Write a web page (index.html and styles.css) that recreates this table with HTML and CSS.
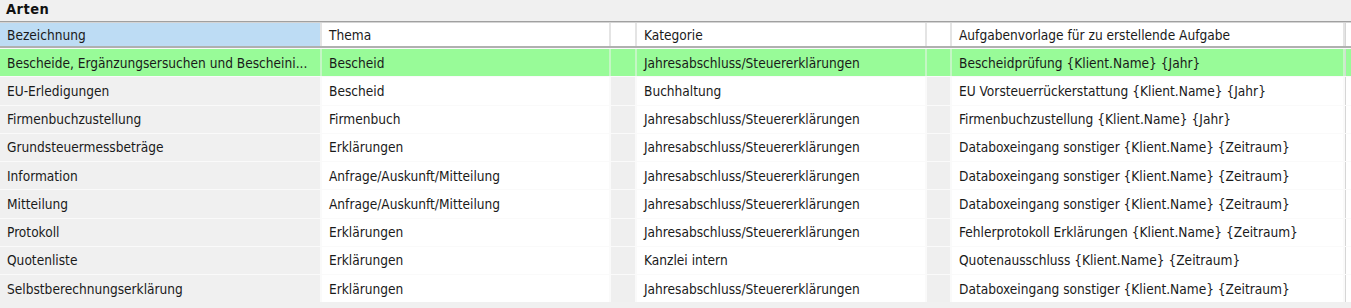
FILE: index.html
```html
<!DOCTYPE html>
<html lang="de">
<head>
<meta charset="utf-8">
<title>Arten</title>
<link rel="stylesheet" href="styles.css">
</head>
<body>
<div class="panel">
  <div class="title">Arten</div>
  <div class="table">
    <div class="row head">
      <div class="cell first">Bezeichnung</div>
      <div class="cell">Thema</div>
      <div class="cell narrow"></div>
      <div class="cell">Kategorie</div>
      <div class="cell narrow"></div>
      <div class="cell">Aufgabenvorlage für zu erstellende Aufgabe</div>
      <div class="cell end"></div>
    </div>
    <div class="row sel">
      <div class="cell first">Bescheide, Ergänzungsersuchen und Bescheini...</div>
      <div class="cell">Bescheid</div>
      <div class="cell narrow"></div>
      <div class="cell">Jahresabschluss/Steuererklärungen</div>
      <div class="cell narrow"></div>
      <div class="cell">Bescheidprüfung {Klient.Name} {Jahr}</div>
      <div class="cell end"></div>
    </div>
    <div class="row">
      <div class="cell first">EU-Erledigungen</div>
      <div class="cell">Bescheid</div>
      <div class="cell narrow"></div>
      <div class="cell">Buchhaltung</div>
      <div class="cell narrow"></div>
      <div class="cell">EU Vorsteuerrückerstattung {Klient.Name} {Jahr}</div>
      <div class="cell end"></div>
    </div>
    <div class="row">
      <div class="cell first">Firmenbuchzustellung</div>
      <div class="cell">Firmenbuch</div>
      <div class="cell narrow"></div>
      <div class="cell">Jahresabschluss/Steuererklärungen</div>
      <div class="cell narrow"></div>
      <div class="cell">Firmenbuchzustellung {Klient.Name} {Jahr}</div>
      <div class="cell end"></div>
    </div>
    <div class="row">
      <div class="cell first">Grundsteuermessbeträge</div>
      <div class="cell">Erklärungen</div>
      <div class="cell narrow"></div>
      <div class="cell">Jahresabschluss/Steuererklärungen</div>
      <div class="cell narrow"></div>
      <div class="cell">Databoxeingang sonstiger {Klient.Name} {Zeitraum}</div>
      <div class="cell end"></div>
    </div>
    <div class="row">
      <div class="cell first">Information</div>
      <div class="cell">Anfrage/Auskunft/Mitteilung</div>
      <div class="cell narrow"></div>
      <div class="cell">Jahresabschluss/Steuererklärungen</div>
      <div class="cell narrow"></div>
      <div class="cell">Databoxeingang sonstiger {Klient.Name} {Zeitraum}</div>
      <div class="cell end"></div>
    </div>
    <div class="row">
      <div class="cell first">Mitteilung</div>
      <div class="cell">Anfrage/Auskunft/Mitteilung</div>
      <div class="cell narrow"></div>
      <div class="cell">Jahresabschluss/Steuererklärungen</div>
      <div class="cell narrow"></div>
      <div class="cell">Databoxeingang sonstiger {Klient.Name} {Zeitraum}</div>
      <div class="cell end"></div>
    </div>
    <div class="row">
      <div class="cell first">Protokoll</div>
      <div class="cell">Erklärungen</div>
      <div class="cell narrow"></div>
      <div class="cell">Jahresabschluss/Steuererklärungen</div>
      <div class="cell narrow"></div>
      <div class="cell">Fehlerprotokoll Erklärungen {Klient.Name} {Zeitraum}</div>
      <div class="cell end"></div>
    </div>
    <div class="row">
      <div class="cell first">Quotenliste</div>
      <div class="cell">Erklärungen</div>
      <div class="cell narrow"></div>
      <div class="cell">Kanzlei intern</div>
      <div class="cell narrow"></div>
      <div class="cell">Quotenausschluss {Klient.Name} {Zeitraum}</div>
      <div class="cell end"></div>
    </div>
    <div class="row">
      <div class="cell first">Selbstberechnungserklärung</div>
      <div class="cell">Erklärungen</div>
      <div class="cell narrow"></div>
      <div class="cell">Jahresabschluss/Steuererklärungen</div>
      <div class="cell narrow"></div>
      <div class="cell">Databoxeingang sonstiger {Klient.Name} {Zeitraum}</div>
      <div class="cell end"></div>
    </div>
  </div>
</div>
</body>
</html>
```
FILE: styles.css
```css
html, body {
  margin: 0;
  padding: 0;
  background: #f0f0f0;
}

body {
  font-family: "DejaVu Sans Condensed", "DejaVu Sans", sans-serif;
  font-stretch: condensed;
  font-size: 13.6px;
  color: #1a1a1a;
}

.panel {
  display: flex;
  flex-direction: column;
}

.title {
  height: 21px;
  line-height: 19px;
  padding-left: 6px;
  font-size: 14.5px;
  letter-spacing: 0.5px;
  font-weight: bold;
  color: #111;
  border-bottom: 1px solid #a0a0a0;
  box-shadow: 0 1px 0 #d4d4d4;
}

.table {
  display: flex;
  flex-direction: column;
  row-gap: 1px;
  margin-top: 1px;
  background: #fafafa;
}

.row {
  display: grid;
  grid-template-columns: 320px 287px 24px 288px 23px 391px 1fr;
  column-gap: 2px;
  height: 27.25px;
  background: #fafafa;
}

.row.head {
  height: 23px;
  background: #e4e4e4;
  border-bottom: 2px solid #b0b0b0;
}

.cell {
  padding-left: 7px;
  white-space: nowrap;
  overflow: hidden;
  background: #ffffff;
  display: flex;
  align-items: center;
}

.cell.first {
  background: #f0f0f0;
}

.cell.narrow {
  background: #efefef;
  padding: 0;
}

.cell.end {
  background: #ffffff;
  padding: 0;
  border-left: 1px solid #d6d6d6;
}

.row.head .cell {
  background: #ffffff;
}

.row.head .cell.first {
  background: #bddcf4;
}

.row.sel {
  background: #c4f6c4;
}

.row.sel .cell {
  background: #98fb98;
}
```
